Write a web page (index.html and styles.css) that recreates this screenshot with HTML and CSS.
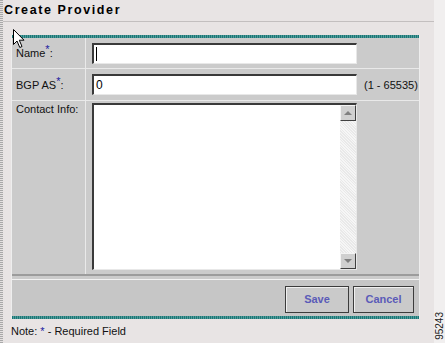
FILE: index.html
```html
<!DOCTYPE html>
<html>
<head>
<meta charset="utf-8">
<link rel="stylesheet" href="styles.css">
</head>
<body>
<div class="screen">
  <div class="edge"></div>
  <div class="content">
    <h1 class="title">Create Provider</h1>
    <div class="rule"></div>
    <div class="panel">
      <div class="teal"></div>
      <div class="rows">
        <div class="label">Name<sup class="req">*</sup>:</div>
        <div class="value"><div class="field"><span class="caret"></span></div></div>
        <div class="label">BGP AS<sup class="req">*</sup>:</div>
        <div class="value"><div class="field">0</div><span class="hint">(1 - 65535)</span></div>
        <div class="label top">Contact Info:</div>
        <div class="value top">
          <div class="area">
            <div class="area-text"></div>
            <div class="scroll">
              <div class="sbtn"><span class="tri up"></span></div>
              <div class="track"></div>
              <div class="sbtn"><span class="tri down"></span></div>
            </div>
          </div>
        </div>
      </div>
      <div class="sep"></div>
      <div class="actions">
        <button class="btn save">Save</button>
        <button class="btn cancel">Cancel</button>
      </div>
      <div class="teal"></div>
    </div>
    <p class="note">Note: <span class="star">*</span> - Required Field</p>
  </div>
  <div class="margin"><span class="fig">95243</span></div>
  <svg class="cursor" width="13" height="20" viewBox="0 0 13 20"><path d="M0.5 0.5 L0.5 15.5 L4 12 L6.8 18.5 L9 17.5 L6.3 11.2 L11 11.2 Z" fill="#fff" stroke="#000" stroke-width="1"/></svg>
</div>
</body>
</html>
```

FILE: styles.css
```css
html, body {
  margin: 0;
  padding: 0;
}
body {
  font-family: "Liberation Sans", Arial, sans-serif;
  font-size: 11px;
  color: #000;
  background: #f1efef;
}
.screen {
  position: relative;
  display: flex;
  width: 445px;
  height: 343px;
  overflow: hidden;
}
.edge {
  width: 3px;
  background: repeating-linear-gradient(to bottom, #a9a9a9 0 1px, #e4e0e0 1px 2px);
}
.content {
  width: 431px;
  background: #e8e4e4;
  display: flex;
  flex-direction: column;
}
.title {
  margin: 0;
  padding: 3px 0 0 1px;
  height: 18px;
  font-size: 12.5px;
  font-weight: bold;
  letter-spacing: 1.6px;
  line-height: 15px;
}
.rule {
  height: 1px;
  background: #c3bfbf;
  margin-bottom: 13px;
}
.panel {
  margin-left: 8px;
  width: 409px;
  background: #e6e6e6;
  border-left: 1px solid #eeeeee;
  border-right: 1px solid #eeeeee;
  box-sizing: border-box;
}
.teal {
  height: 3px;
  background: repeating-linear-gradient(to right, #1c7676 0 1px, #4f9c9a 1px 2px);
}
.rows {
  display: grid;
  grid-template-columns: 73px 1fr;
  grid-template-rows: 30px 31px 173px;
  gap: 1px 1px;
  background: #e9e9e9;
}
.label {
  background: #cbcbcb;
  padding: 0 0 0 4px;
  display: flex;
  align-items: center;
  color: #111;
}
.label.top {
  align-items: flex-start;
  padding-top: 2px;
}
.req {
  color: #1a1aa0;
  font-size: 11px;
  vertical-align: 0;
  position: relative;
  top: -4px;
  line-height: 0;
}
.value {
  background: #cbcbcb;
  display: flex;
  align-items: center;
  padding-left: 6px;
}
.value.top {
  align-items: flex-start;
  padding-top: 2px;
}
.field {
  width: 265px;
  height: 21px;
  box-sizing: border-box;
  background: #fff;
  border-top: 2px solid #3a3a3a;
  border-left: 2px solid #3a3a3a;
  border-bottom: 1px solid #e8e8e8;
  border-right: 1px solid #e8e8e8;
  padding-left: 2px;
  font-size: 12px;
  line-height: 17px;
  display: flex;
  align-items: center;
}
.caret {
  width: 1px;
  height: 14px;
  background: #000;
}
.hint {
  margin-left: 7px;
  color: #111;
}
.area {
  width: 265px;
  height: 167px;
  box-sizing: border-box;
  background: #fff;
  border-top: 2px solid #3a3a3a;
  border-left: 2px solid #3a3a3a;
  border-bottom: 1px solid #e8e8e8;
  border-right: 1px solid #e8e8e8;
  display: flex;
}
.area-text {
  flex: 1;
}
.scroll {
  width: 16px;
  display: flex;
  flex-direction: column;
  background: #ececec;
}
.track {
  flex: 1;
  background: repeating-linear-gradient(45deg, #e9e9e9 0 1px, #f6f6f6 1px 2px);
}
.sbtn {
  height: 16px;
  box-sizing: border-box;
  background: #d0d0d0;
  border-top: 1px solid #f4f4f4;
  border-left: 1px solid #f4f4f4;
  border-right: 1px solid #404040;
  border-bottom: 1px solid #404040;
  display: flex;
  align-items: center;
  justify-content: center;
}
.tri {
  width: 0;
  height: 0;
  border-left: 4px solid transparent;
  border-right: 4px solid transparent;
}
.tri.up { border-bottom: 4px solid #808080; }
.tri.down { border-top: 4px solid #808080; }
.sep {
  height: 6px;
  box-sizing: border-box;
  background: #cbcbcb;
  border-top: 2px solid #9c9c9c;
  border-bottom: 1px solid #f2f2f2;
}
.actions {
  height: 36px;
  background: #c6c6c6;
  display: flex;
  justify-content: flex-end;
  align-items: center;
  gap: 4px;
  padding-right: 5px;
}
.btn {
  height: 27px;
  box-sizing: border-box;
  background: #cacaca;
  border: 1px solid #3c3c3c;
  box-shadow: inset 1px 1px 0 #f0f0f0;
  font-family: "Liberation Sans", Arial, sans-serif;
  font-size: 11px;
  font-weight: bold;
  color: #5b5bb8;
  padding: 0;
  margin-top: 2px;
}
.save { width: 64px; }
.cancel { width: 61px; }
.note {
  margin: 6px 0 0 8px;
  color: #111;
}
.star {
  color: #1a1aa0;
}
.margin {
  width: 11px;
  background: #f1efef;
  display: flex;
  flex-direction: column;
  justify-content: flex-end;
  align-items: center;
  padding-bottom: 3px;
  box-sizing: border-box;
}
.fig {
  writing-mode: vertical-rl;
  transform: rotate(180deg);
  font-size: 10px;
  color: #222;
}
.cursor {
  position: absolute;
  left: 13px;
  top: 29px;
}
```
